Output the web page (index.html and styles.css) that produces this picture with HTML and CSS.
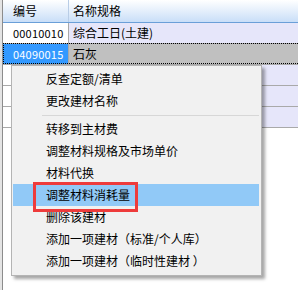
FILE: index.html
```html
<!DOCTYPE html>
<html>
<head>
    <meta charset="utf-8">
    <title>材料列表</title>
    <link rel="stylesheet" href="styles.css">
</head>
<body>
    <div class="grid">
        <div class="row head">
            <div class="cell code">编号</div>
            <div class="cell name">名称规格</div>
        </div>
        <div class="row">
            <div class="cell code num">00010010</div>
            <div class="cell name">综合工日(土建)</div>
        </div>
        <div class="row selected">
            <div class="cell code num">04090015</div>
            <div class="cell name">石灰</div>
        </div>
        <div class="row">
            <div class="cell code"></div>
            <div class="cell name"></div>
        </div>
        <div class="row">
            <div class="cell code"></div>
            <div class="cell name"></div>
        </div>
        <div class="row">
            <div class="cell code"></div>
            <div class="cell name"></div>
        </div>
    </div>

    <div class="menu">
        <div class="item">反查定额/清单</div>
        <div class="item">更改建材名称</div>
        <div class="sep"></div>
        <div class="item">转移到主材费</div>
        <div class="item">调整材料规格及市场单价</div>
        <div class="item">材料代换</div>
        <div class="item active">调整材料消耗量</div>
        <div class="item">删除该建材</div>
        <div class="item">添加一项建材（标准/个人库）</div>
        <div class="item">添加一项建材（临时性建材 ）</div>
    </div>
    <div class="mark"></div>
</body>
</html>
```

FILE: styles.css
```css
body {
    margin: 0;
    width: 298px;
    height: 290px;
    overflow: hidden;
    position: relative;
    background: #fff;
    font-family: "Noto Sans CJK SC", "Liberation Sans", sans-serif;
    font-size: 12px;
    color: #000;
}
.grid {
    height: 290px;
    padding-left: 1px;
    border-left: 2px solid #e4e4e4;
    box-sizing: border-box;
    box-shadow: inset 1px 0 0 #8c8c8c;
}
.row {
    display: grid;
    grid-template-columns: 66px 1fr;
    height: 21px;
    border-bottom: 1px solid #a9a9a9;
    box-sizing: border-box;
    position: relative;
}
.cell {
    line-height: 20px;
    padding-left: 10px;
    white-space: nowrap;
    overflow: hidden;
}
.cell.code {
    background: #fff;
    border-right: 1px solid #a9a9a9;
}
.cell.name {
    background: #e6e6fa;
    padding-left: 4px;
}
.num {
    font-size: 11px;
    letter-spacing: 0.2px;
}
.row.head {
    height: 23px;
    border-bottom: 1px solid #6a9fd8;
    background: linear-gradient(#ffffff, #c9def8);
}
.row.head .cell {
    background: transparent;
    line-height: 22px;
}
.row.head .cell.code {
    border-right-color: #b9cde6;
}
.row.selected .cell.code {
    background: #3399ff;
    color: #fff;
}
.row.selected .cell.name {
    background: #c0c0c0;
}
.row.selected::after {
    content: "";
    position: absolute;
    left: 0;
    right: 0;
    top: -1px;
    height: 21px;
    border: 1px dotted #000;
    border-right: none;
    box-sizing: border-box;
}
.menu {
    position: absolute;
    left: 11px;
    top: 65px;
    width: 251px;
    height: 211px;
    box-sizing: border-box;
    padding: 2px 1px 3px;
    background: #f1f1f1;
    border: 1px solid #b4b4b4;
    box-shadow: 3px 3px 3px rgba(0, 0, 0, 0.35);
}
.item {
    height: 22px;
    line-height: 22px;
    padding-left: 33px;
    margin-right: 1px;
    white-space: nowrap;
}
.item.active {
    background: #91c9f7;
}
.sep {
    height: 6px;
    margin-left: 29px;
    margin-right: 1px;
    box-sizing: border-box;
    border-top: 3px solid transparent;
    background: linear-gradient(#d7d7d7, #d7d7d7) 0 0 / 100% 1px no-repeat;
    background-origin: padding-box;
}
.mark {
    position: absolute;
    left: 33px;
    top: 182px;
    width: 105px;
    height: 30px;
    box-sizing: border-box;
    border: 3px solid #ee3b3b;
}
```
